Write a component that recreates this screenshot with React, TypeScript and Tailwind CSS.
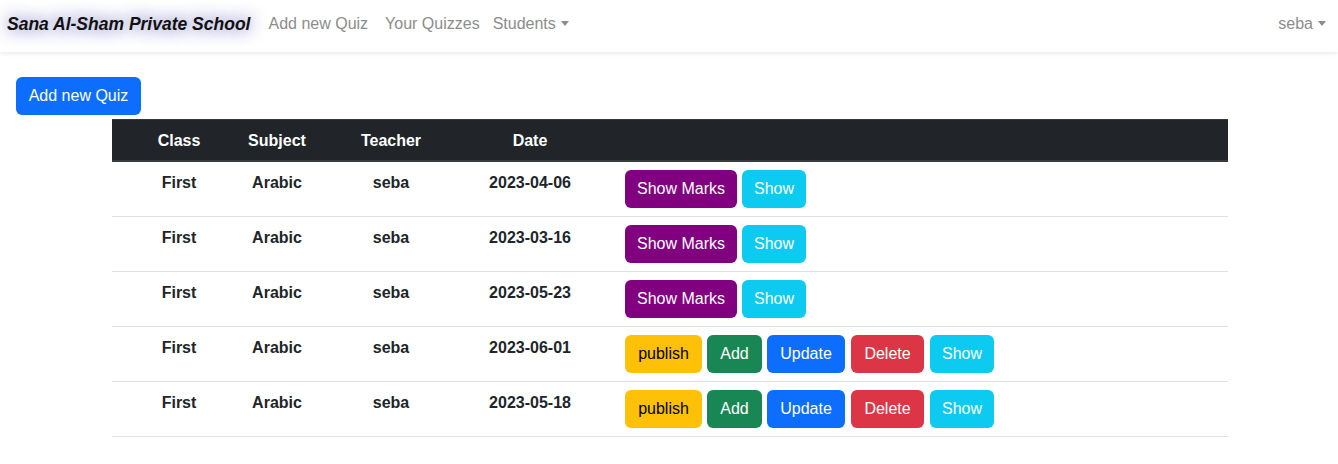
import React from 'react';

type Quiz = {
  className: string;
  subject: string;
  teacher: string;
  date: string;
  published: boolean;
};

const QUIZZES: Quiz[] = [
  { className: 'First', subject: 'Arabic', teacher: 'seba', date: '2023-04-06', published: true },
  { className: 'First', subject: 'Arabic', teacher: 'seba', date: '2023-03-16', published: true },
  { className: 'First', subject: 'Arabic', teacher: 'seba', date: '2023-05-23', published: true },
  { className: 'First', subject: 'Arabic', teacher: 'seba', date: '2023-06-01', published: false },
  { className: 'First', subject: 'Arabic', teacher: 'seba', date: '2023-05-18', published: false },
];

const Caret: React.FC = () => (
  <span className="inline-block ml-[5px] align-[3px] border-t-[5px] border-x-[4px] border-b-0 border-solid border-x-transparent border-t-[#8c8c8c]"></span>
);

// widths follow the reference buttons
const Btn: React.FC<{ color: string; children: React.ReactNode }> = ({ color, children }) => (
  <button className={`h-[38px] rounded-[6px] text-base leading-6 text-center ${color}`}>{children}</button>
);

const Navbar: React.FC = () => (
  <nav className="h-[52px] flex items-center justify-between pl-[7px] pr-[12px] pb-[4px] bg-white shadow-[0_2px_4px_rgba(0,0,0,0.08)] relative z-10">
    <div className="flex items-center">
      <a
        href="#"
        className="text-[17.5px] font-bold italic text-[#111] mr-[18px] [text-shadow:0_0_16px_rgba(50,50,160,0.8)]"
      >
        Sana Al-Sham Private School
      </a>
      <div className="flex items-center text-base text-[#8c8c8c]">
        <a href="#">Add new Quiz</a>
        <a href="#" className="ml-[17px]">Your Quizzes</a>
        <a href="#" className="ml-[13px]">
          Students
          <Caret />
        </a>
      </div>
    </div>
    <a href="#" className="text-base text-[#8c8c8c]">
      seba
      <Caret />
    </a>
  </nav>
);

const App: React.FC = () => {
  return (
    <div className="min-h-[464px] bg-white text-[#212529] font-['Liberation_Sans',Arial,sans-serif]">
      <Navbar />
      <div className="pt-[25px]">
        <div className="pl-4">
          <button className="h-[38px] w-[125px] rounded-[6px] bg-[#0d6efd] text-white text-base">Add new Quiz</button>
        </div>
        <div className="ml-[112px] w-[1116px] mt-[4px]">
          <div className="flex h-[43px] bg-[#212529] text-white font-bold text-base border-t border-t-[#32383e] border-b-2 border-b-[#373b3e]">
            <div className="w-[134px] text-center pt-[9px]">Class</div>
            <div className="w-[62px] text-center pt-[9px]">Subject</div>
            <div className="w-[166px] text-center pt-[9px]">Teacher</div>
            <div className="w-[112px] text-center pt-[9px]">Date</div>
            <div className="flex-1"></div>
          </div>
          {QUIZZES.map((q) => (
            <div key={q.date} className="flex h-[55px] border-b border-[#dee2e6] font-bold text-base">
              <div className="w-[134px] text-center pt-[9px]">{q.className}</div>
              <div className="w-[62px] text-center pt-[9px] whitespace-nowrap">{q.subject}</div>
              <div className="w-[166px] text-center pt-[9px]">{q.teacher}</div>
              <div className="w-[112px] text-center pt-[9px]">{q.date}</div>
              <div className="flex-1 flex items-start gap-[5px] pt-2 pl-[39px] font-normal">
                {q.published ? (
                  <>
                    <Btn color="w-[112px] bg-[#800080] text-white">Show Marks</Btn>
                    <Btn color="w-[64px] bg-[#0dcaf0] text-white">Show</Btn>
                  </>
                ) : (
                  <>
                    <Btn color="w-[77px] bg-[#ffc107] text-black">publish</Btn>
                    <Btn color="w-[55px] bg-[#198754] text-white">Add</Btn>
                    <Btn color="w-[78px] bg-[#0d6efd] text-white">Update</Btn>
                    <Btn color="w-[73px] ml-[1px] bg-[#dc3545] text-white">Delete</Btn>
                    <Btn color="w-[64px] ml-[1px] bg-[#0dcaf0] text-white">Show</Btn>
                  </>
                )}
              </div>
            </div>
          ))}
        </div>
      </div>
    </div>
  );
};

export default App;
